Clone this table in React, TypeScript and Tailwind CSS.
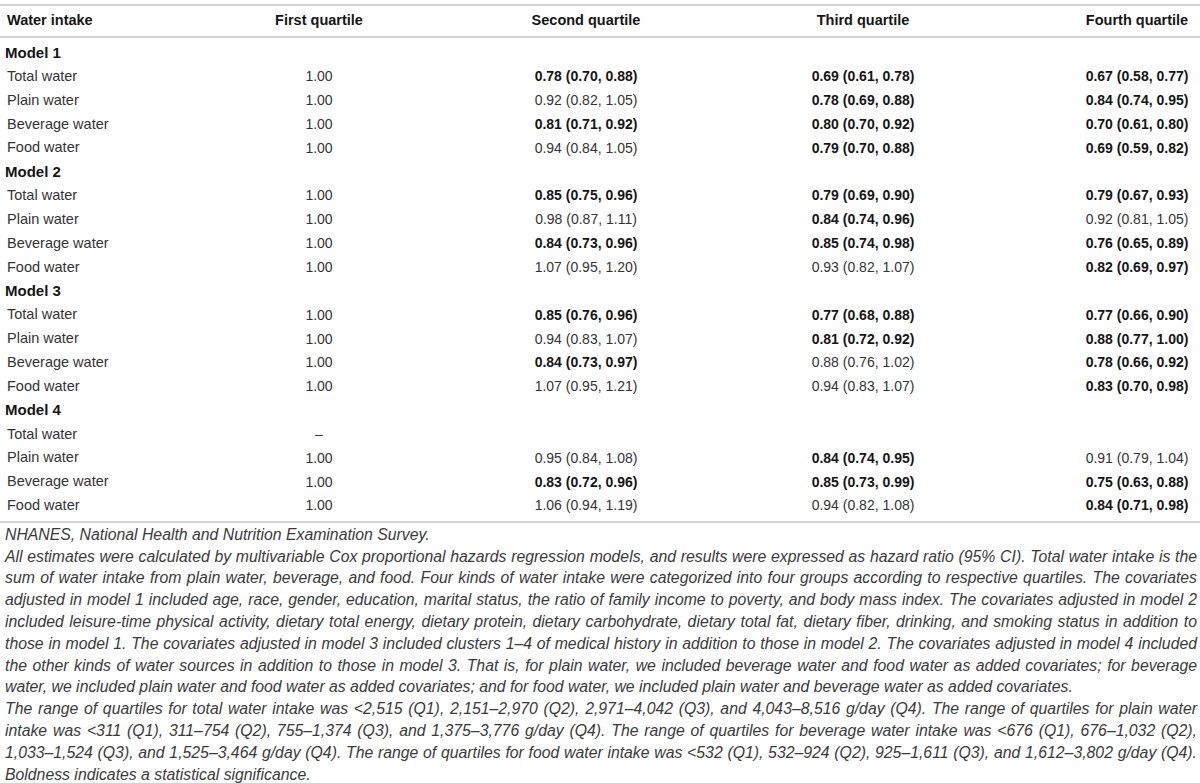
type Row = { label: string; cells: string[] };
type Group = { title: string; rows: Row[] };

// "*" prefix marks a bold (significant) value
const groups: Group[] = [
  {
    title: "Model 1",
    rows: [
      { label: "Total water", cells: ["1.00", "*0.78 (0.70, 0.88)", "*0.69 (0.61, 0.78)", "*0.67 (0.58, 0.77)"] },
      { label: "Plain water", cells: ["1.00", "0.92 (0.82, 1.05)", "*0.78 (0.69, 0.88)", "*0.84 (0.74, 0.95)"] },
      { label: "Beverage water", cells: ["1.00", "*0.81 (0.71, 0.92)", "*0.80 (0.70, 0.92)", "*0.70 (0.61, 0.80)"] },
      { label: "Food water", cells: ["1.00", "0.94 (0.84, 1.05)", "*0.79 (0.70, 0.88)", "*0.69 (0.59, 0.82)"] },
    ],
  },
  {
    title: "Model 2",
    rows: [
      { label: "Total water", cells: ["1.00", "*0.85 (0.75, 0.96)", "*0.79 (0.69, 0.90)", "*0.79 (0.67, 0.93)"] },
      { label: "Plain water", cells: ["1.00", "0.98 (0.87, 1.11)", "*0.84 (0.74, 0.96)", "0.92 (0.81, 1.05)"] },
      { label: "Beverage water", cells: ["1.00", "*0.84 (0.73, 0.96)", "*0.85 (0.74, 0.98)", "*0.76 (0.65, 0.89)"] },
      { label: "Food water", cells: ["1.00", "1.07 (0.95, 1.20)", "0.93 (0.82, 1.07)", "*0.82 (0.69, 0.97)"] },
    ],
  },
  {
    title: "Model 3",
    rows: [
      { label: "Total water", cells: ["1.00", "*0.85 (0.76, 0.96)", "*0.77 (0.68, 0.88)", "*0.77 (0.66, 0.90)"] },
      { label: "Plain water", cells: ["1.00", "0.94 (0.83, 1.07)", "*0.81 (0.72, 0.92)", "*0.88 (0.77, 1.00)"] },
      { label: "Beverage water", cells: ["1.00", "*0.84 (0.73, 0.97)", "0.88 (0.76, 1.02)", "*0.78 (0.66, 0.92)"] },
      { label: "Food water", cells: ["1.00", "1.07 (0.95, 1.21)", "0.94 (0.83, 1.07)", "*0.83 (0.70, 0.98)"] },
    ],
  },
  {
    title: "Model 4",
    rows: [
      { label: "Total water", cells: ["–", "", "", ""] },
      { label: "Plain water", cells: ["1.00", "0.95 (0.84, 1.08)", "*0.84 (0.74, 0.95)", "0.91 (0.79, 1.04)"] },
      { label: "Beverage water", cells: ["1.00", "*0.83 (0.72, 0.96)", "*0.85 (0.73, 0.99)", "*0.75 (0.63, 0.88)"] },
      { label: "Food water", cells: ["1.00", "1.06 (0.94, 1.19)", "0.94 (0.82, 1.08)", "*0.84 (0.71, 0.98)"] },
    ],
  },
];

const headers = ["First quartile", "Second quartile", "Third quartile", "Fourth quartile"];

const notes: { text: string; full: boolean }[] = [
  { text: "NHANES, National Health and Nutrition Examination Survey.", full: false },
  { text: "All estimates were calculated by multivariable Cox proportional hazards regression models, and results were expressed as hazard ratio (95% CI). Total water intake is the", full: true },
  { text: "sum of water intake from plain water, beverage, and food. Four kinds of water intake were categorized into four groups according to respective quartiles. The covariates", full: true },
  { text: "adjusted in model 1 included age, race, gender, education, marital status, the ratio of family income to poverty, and body mass index. The covariates adjusted in model 2", full: true },
  { text: "included leisure-time physical activity, dietary total energy, dietary protein, dietary carbohydrate, dietary total fat, dietary fiber, drinking, and smoking status in addition to", full: true },
  { text: "those in model 1. The covariates adjusted in model 3 included clusters 1–4 of medical history in addition to those in model 2. The covariates adjusted in model 4 included", full: true },
  { text: "the other kinds of water sources in addition to those in model 3. That is, for plain water, we included beverage water and food water as added covariates; for beverage", full: true },
  { text: "water, we included plain water and food water as added covariates; and for food water, we included plain water and beverage water as added covariates.", full: false },
  { text: "The range of quartiles for total water intake was <2,515 (Q1), 2,151–2,970 (Q2), 2,971–4,042 (Q3), and 4,043–8,516 g/day (Q4). The range of quartiles for plain water", full: true },
  { text: "intake was <311 (Q1), 311–754 (Q2), 755–1,374 (Q3), and 1,375–3,776 g/day (Q4). The range of quartiles for beverage water intake was <676 (Q1), 676–1,032 (Q2),", full: true },
  { text: "1,033–1,524 (Q3), and 1,525–3,464 g/day (Q4). The range of quartiles for food water intake was <532 (Q1), 532–924 (Q2), 925–1,611 (Q3), and 1,612–3,802 g/day (Q4).", full: true },
  { text: "Boldness indicates a statistical significance.", full: false },
];

const gridCols = "grid grid-cols-[118px_402px_132px_422px_126px]";

function Cell({ value }: { value: string }) {
  const bold = value.startsWith("*");
  return (
    <div className="flex items-center justify-center whitespace-nowrap">
      <span className={bold ? "font-bold text-[#151515]" : "text-[#333]"}>
        {bold ? value.slice(1) : value}
      </span>
    </div>
  );
}

export default function App() {
  return (
    <div className="w-[1200px] h-[783px] overflow-hidden bg-white font-['Liberation_Sans',Arial,sans-serif] text-[#2a2a2a]">
      <div className="pt-[4px]">
        <div className="h-[2px] bg-[#d4d4d4]" />
        <div className={`${gridCols} h-[30px] items-center text-[14.5px] font-bold text-[#151515]`}>
          <div className="pl-[7px] whitespace-nowrap">Water intake</div>
          {headers.map((h) => (
            <div key={h} className="text-center whitespace-nowrap">
              {h}
            </div>
          ))}
        </div>
        <div className="h-[2px] bg-[#d4d4d4]" />

        <div className="pt-[3px] pb-[3px] text-[14px]">
          {groups.map((g) => (
            <div key={g.title}>
              <div className={`${gridCols} h-[23.85px] items-center`}>
                <div className="pl-[5px] text-[15px] font-bold text-[#151515] whitespace-nowrap">
                  {g.title}
                </div>
              </div>
              {g.rows.map((r) => (
                <div key={r.label} className={`${gridCols} h-[23.85px] items-center`}>
                  <div className="pl-[7px] text-[14.5px] text-[#333] whitespace-nowrap">{r.label}</div>
                  {r.cells.map((c, i) => (
                    <Cell key={i} value={c} />
                  ))}
                </div>
              ))}
            </div>
          ))}
        </div>
        <div className="h-[2px] bg-[#d4d4d4]" />

        <div className="pt-[1px] pl-[5px] pr-[3px] text-[15.8px] italic leading-[21.8px] text-[#3a3a3a]">
          {notes.map((n, i) => (
            <div
              key={i}
              className={
                n.full
                  ? "whitespace-nowrap text-justify [text-align-last:justify]"
                  : "whitespace-nowrap"
              }
            >
              {n.text}
            </div>
          ))}
        </div>
      </div>
    </div>
  );
}
